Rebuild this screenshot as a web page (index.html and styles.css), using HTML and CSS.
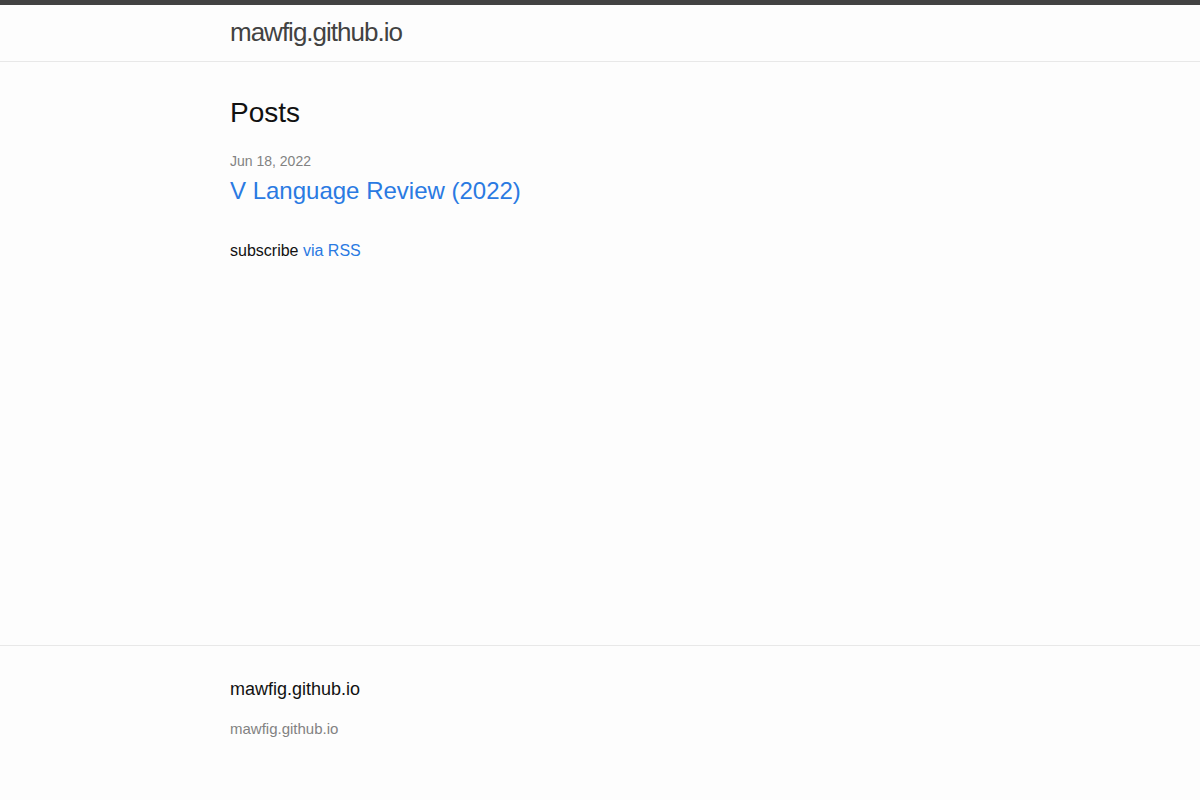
FILE: index.html
```html
<!DOCTYPE html>
<html lang="en">
<head>
<meta charset="utf-8">
<title>mawfig.github.io</title>
<link rel="stylesheet" href="styles.css">
</head>
<body>
<header class="site-header">
  <div class="wrapper">
    <a class="site-title" href="#">mawfig.github.io</a>
  </div>
</header>
<main class="page-content">
  <div class="wrapper">
    <div class="home">
      <h2 class="post-list-heading">Posts</h2>
      <ul class="post-list">
        <li>
          <span class="post-meta">Jun 18, 2022</span>
          <h3><a class="post-link" href="#">V Language Review (2022)</a></h3>
        </li>
      </ul>
      <p class="rss-subscribe">subscribe <a href="#">via RSS</a></p>
    </div>
  </div>
</main>
<footer class="site-footer">
  <div class="wrapper">
    <h2 class="footer-heading">mawfig.github.io</h2>
    <div class="footer-col-wrapper">
      <div class="footer-col">
        <ul class="contact-list">
          <li>mawfig.github.io</li>
        </ul>
      </div>
    </div>
  </div>
</footer>
</body>
</html>
```
FILE: styles.css
```css
* { box-sizing: border-box; }
html, body { margin: 0; padding: 0; }
body {
  font: 400 16px/1.5 "Liberation Sans", Arial, Helvetica, sans-serif;
  color: #111111;
  background-color: #fdfdfd;
  min-height: 100vh;
  display: flex;
  flex-direction: column;
}
a { color: #2a7ae2; text-decoration: none; }
.wrapper {
  max-width: 800px;
  margin: 0 auto;
  padding: 0 30px;
}
.site-header {
  box-sizing: content-box;
  border-top: 5px solid #424242;
  border-bottom: 1px solid #e8e8e8;
  min-height: 55.95px;
}
.site-title {
  font-size: 26px;
  font-weight: 300;
  line-height: 54px;
  letter-spacing: -1px;
  color: #424242;
  display: inline-block;
}
.page-content {
  padding: 30px 0;
  flex: 1;
}
.post-list-heading {
  font-size: 28px;
  font-weight: 400;
  margin: 0 0 15px;
  line-height: 1.5;
}
.post-list {
  margin: 0 0 15px;
  padding: 0;
  list-style: none;
}
.post-list li { margin-bottom: 30px; }
.post-meta {
  font-size: 14px;
  color: #828282;
}
.post-list h3 {
  margin: 0 0 15px;
  font-weight: 400;
  font-size: 24px;
  line-height: 1.5;
}
.post-link { display: block; font-size: 24px; }
.rss-subscribe { margin: 0 0 15px; }
.site-footer {
  border-top: 1px solid #e8e8e8;
  padding: 30px 0;
}
.footer-heading {
  font-size: 18px;
  font-weight: 400;
  margin: 0 0 15px;
  line-height: 1.5;
}
.footer-col-wrapper {
  font-size: 15px;
  color: #828282;
}
.footer-col { margin-bottom: 30px; }
.contact-list {
  list-style: none;
  margin: 0;
  padding: 0;
}
```
